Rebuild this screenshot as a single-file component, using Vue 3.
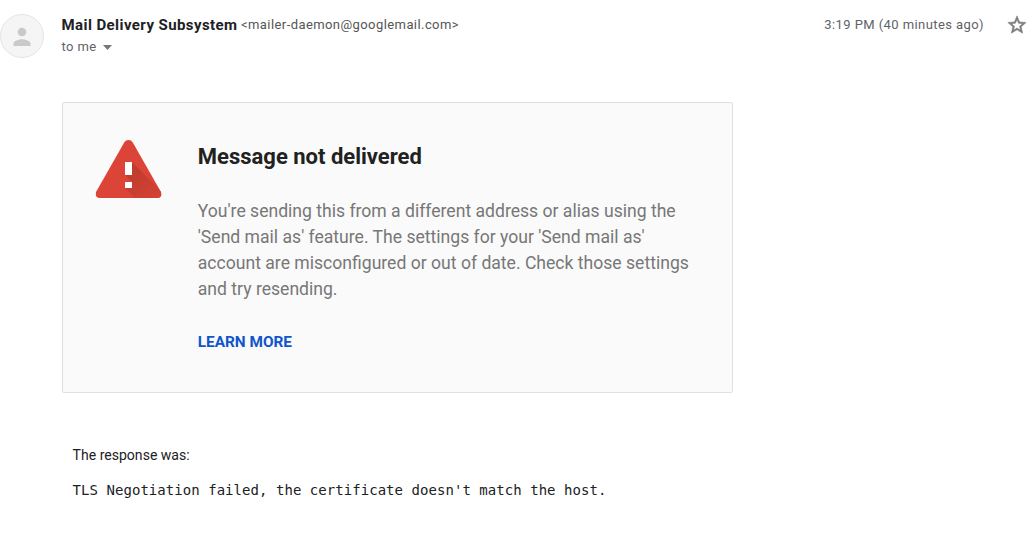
<template>
    <div class="message">
        <header class="message-header">
            <div class="avatar">
                <svg viewBox="0 0 44 44" width="44" height="44">
                    <circle cx="22" cy="22" r="21.5" fill="#f5f5f5" stroke="#e4e4e4" />
                    <circle cx="22" cy="18" r="4.3" fill="#c9c9c9" />
                    <path d="M13.5 32v-2.2c0-3 5.5-4.6 8.5-4.6s8.5 1.6 8.5 4.6V32z" fill="#c9c9c9" />
                </svg>
            </div>
            <div class="sender-info">
                <div class="sender-line">
                    <span class="sender-name">{{ mail.sender }}</span>
                    <span class="sender-email">&lt;{{ mail.email }}&gt;</span>
                </div>
                <div class="recipient">
                    <span>to me</span>
                    <svg class="arrow" viewBox="0 0 9 5" width="9" height="5">
                        <path d="M0 0h9L4.5 5z" fill="#777" />
                    </svg>
                </div>
            </div>
            <span class="date">{{ mail.date }}</span>
            <svg class="star" viewBox="0 0 24 24" width="22" height="22" @click="starred = !starred">
                <path v-if="starred" d="M12 17.27 18.18 21l-1.64-7.03L22 9.24l-7.19-.61L12 2 9.19 8.63 2 9.24l5.46 4.73L5.82 21z" fill="#f4b400" />
                <path v-else d="M22 9.24l-7.19-.62L12 2 9.19 8.63 2 9.24l5.46 4.73L5.82 21 12 17.27 18.18 21l-1.63-7.03L22 9.24zM12 15.4l-3.76 2.27 1-4.28-3.32-2.88 4.38-.38L12 6.1l1.71 4.04 4.38.38-3.32 2.88 1 4.28L12 15.4z" fill="#7c7c7c" stroke="#7c7c7c" stroke-width="0.6" />
            </svg>
        </header>

        <section class="card">
            <svg class="warning-icon" viewBox="-0.5 0 67 58" width="67" height="58">
                <defs>
                    <linearGradient id="shadow" x1="34" y1="30" x2="56" y2="58" gradientUnits="userSpaceOnUse">
                        <stop offset="0" stop-color="#be3c2e" />
                        <stop offset="1" stop-color="#d24133" />
                    </linearGradient>
                    <clipPath id="triangle">
                        <path d="M28.7 2.4Q30.2 0 33 0t4.3 2.4L65.2 51.5Q66.6 54 65.5 56T62 58H4Q1.6 58 .5 56t.3-4.5z" />
                    </clipPath>
                </defs>
                <g clip-path="url(#triangle)">
                    <path d="M0 0h66v58H0z" fill="#db4437" />
                    <path d="M36.5 22l30 30v6H39.5L29.5 48l7-6-7-7z" fill="url(#shadow)" />
                </g>
                <path d="M29.5 22h7v13h-7zM29.5 42h7v6h-7z" fill="#fff" />
            </svg>
            <div class="card-content">
                <h1 class="card-title">Message not delivered</h1>
                <p class="card-text">
                    You're sending this from a different address or alias using the
                    'Send mail as' feature. The settings for your 'Send mail as'
                    account are misconfigured or out of date. Check those settings
                    and try resending.
                </p>
                <a class="learn-more" href="#">LEARN MORE</a>
            </div>
        </section>

        <section class="response">
            <p class="response-label">The response was:</p>
            <p class="response-text">{{ mail.response }}</p>
        </section>
    </div>
</template>

<script setup>
import { ref } from 'vue';

const starred = ref(false);

const mail = {
    sender: 'Mail Delivery Subsystem',
    email: 'mailer-daemon@googlemail.com',
    date: '3:19 PM (40 minutes ago)',
    response: "TLS Negotiation failed, the certificate doesn't match the host."
};
</script>

<style>
body {
    margin: 0;
    background-color: #fff;
}
</style>

<style scoped>
.message {
    width: 1028px;
    height: 537px;
    overflow: hidden;
    box-sizing: border-box;
    padding-top: 14px;
    font-family: Roboto, "Liberation Sans", sans-serif;
    color: #202124;
}

.message-header {
    display: flex;
    align-items: flex-start;
    height: 88px;
}

.avatar {
    width: 44px;
    height: 44px;
    margin-right: 17.5px;
}

.sender-info {
    flex: 1;
}

.sender-line {
    display: flex;
    align-items: center;
    gap: 3.5px;
    line-height: 22px;
    white-space: nowrap;
}

.sender-name {
    font-size: 15px;
    font-weight: 700;
    letter-spacing: 0.42px;
}

.sender-email,
.date,
.recipient {
    font-size: 13px;
    letter-spacing: 0.42px;
    color: #5f6368;
}

.sender-email {
    color: #555;
}

.recipient {
    display: flex;
    align-items: center;
    gap: 6px;
    line-height: 22px;
}

.arrow {
    margin-top: 1px;
}

.date {
    line-height: 22px;
    margin-right: 22px;
}

.star {
    cursor: pointer;
}

.card {
    display: flex;
    align-items: flex-start;
    box-sizing: border-box;
    width: 671px;
    height: 291px;
    margin-left: 62px;
    padding: 37px 32px 0;
    border: 1px solid #e0e0e0;
    border-radius: 2px;
    background-color: #fafafa;
}

.warning-icon {
    flex-shrink: 0;
    margin-right: 35.8px;
}

.card-content {
    width: 500px;
}

.card-title {
    margin: 0 0 25px;
    font-size: 22px;
    font-weight: 700;
    line-height: 33px;
    color: #212121;
}

.card-text {
    margin: 0 0 27px;
    font-size: 17.58px;
    line-height: 26px;
    color: #777;
}

.learn-more {
    display: block;
    font-size: 15.35px;
    font-weight: 700;
    line-height: 26px;
    color: #1155cc;
    text-decoration: none;
}

.response {
    padding: 52px 0 0 72.6px;
}

.response-label {
    margin: 0 0 15px;
    font-size: 14.05px;
    line-height: 20px;
}

.response-text {
    margin: 0;
    font-family: "DejaVu Sans Mono", monospace;
    font-size: 14px;
    letter-spacing: 0.045px;
    line-height: 20px;
}
</style>
